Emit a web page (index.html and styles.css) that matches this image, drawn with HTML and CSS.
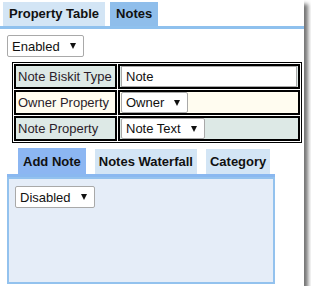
FILE: index.html
```html
<!DOCTYPE html>
<html lang="en">
<head>
<meta charset="UTF-8">
<meta name="viewport" content="width=device-width, initial-scale=1.0">
<title>Notes</title>
<link rel="stylesheet" href="styles.css">
</head>
<body>

<div class="window">
    <div class="tabs">
        <span class="tab">Property Table</span>
        <span class="tab active">Notes</span>
    </div>

    <div class="pick enabled-pick">
        <span>Enabled</span><span class="arrow"></span>
    </div>

    <table class="props">
        <tr class="teal">
            <td class="label">Note Biskit Type</td>
            <td class="value"><input type="text" class="text-input" value="Note"></td>
        </tr>
        <tr class="cream">
            <td class="label">Owner Property</td>
            <td class="value"><div class="pick"><span>Owner</span><span class="arrow"></span></div></td>
        </tr>
        <tr class="teal">
            <td class="label">Note Property</td>
            <td class="value"><div class="pick"><span>Note Text</span><span class="arrow"></span></div></td>
        </tr>
    </table>

    <div class="subtabs">
        <span class="subtab active">Add Note</span>
        <span class="subtab">Notes Waterfall</span>
        <span class="subtab">Category</span>
    </div>
    <div class="panel">
        <div class="pick"><span>Disabled</span><span class="arrow"></span></div>
    </div>
</div>

</body>
</html>
```

FILE: styles.css
```css
/* Notes editor window */
body {
    margin: 0;
    background: #fff;
    font-family: "Liberation Sans", Arial, sans-serif;
    font-size: 13px;
    color: #111;
}
.window {
    width: 304px;
    height: 286px;
    background: #fff;
    box-shadow: 4px 4px 4px rgba(0,0,0,0.55);
    overflow: hidden;
}

/* top tabs */
.tabs {
    display: flex;
    gap: 5px;
    padding: 2px 0 0 3px;
    border-bottom: 3px solid #8fc1ee;
}
.tab {
    background: #d3e5f5;
    font-weight: bold;
    line-height: 16px;
    padding: 4px 6px;
}
.tab.active {
    background: #8fbeeb;
}

/* fake select boxes */
.pick {
    display: inline-flex;
    align-items: center;
    gap: 10px;
    height: 22px;
    box-sizing: border-box;
    padding: 0 7px 0 4px;
    background: #fff;
    border: 1px solid #a9a9a9;
    border-radius: 2px;
    font-size: 13px;
    color: #111;
}
.arrow {
    width: 0;
    height: 0;
    border-left: 3px solid transparent;
    border-right: 3px solid transparent;
    border-top: 6px solid #111;
}
.enabled-pick {
    margin: 6px 0 0 7px;
}

/* property table */
.props {
    margin: 5px 0 0 12px;
    width: 290px;
    border: 1px solid #000;
    border-spacing: 1px;
}
.props td {
    border: 2px solid #000;
    height: 21px;
    padding: 0;
}
.props .label {
    width: 97px;
    padding-left: 2px;
    color: #2b1d2a;
    white-space: nowrap;
}
.props .value {
    padding: 0 1px;
    line-height: 0;
}
.props .pick {
    height: 21px;
    line-height: normal;
}
.teal td {
    background: #dde9e6;
}
.cream td {
    background: #fffcf0;
}
.text-input {
    display: block;
    width: 100%;
    height: 21px;
    box-sizing: border-box;
    border: 1px solid #a9a9a9;
    padding: 0 4px;
    font: 13px "Liberation Sans", Arial, sans-serif;
    color: #111;
}

/* inner tabs and panel */
.subtabs {
    display: flex;
    align-items: flex-end;
    gap: 9px;
    margin: 5px 29px 0 7px;
    padding-left: 11px;
    border-bottom: 3px solid #8ab8f0;
}
.subtab {
    background: #d3e5f5;
    font-weight: bold;
    line-height: 16px;
    padding: 5px 4px 4px;
}
.subtab.active {
    background: #8cb6f2;
    padding: 6px 5px 4px;
}
.panel {
    margin-left: 7px;
    width: 268px;
    height: 107px;
    box-sizing: border-box;
    background: #e5edf8;
    border: 2px solid #93c2ee;
    padding: 7px 0 0 6px;
}
```
